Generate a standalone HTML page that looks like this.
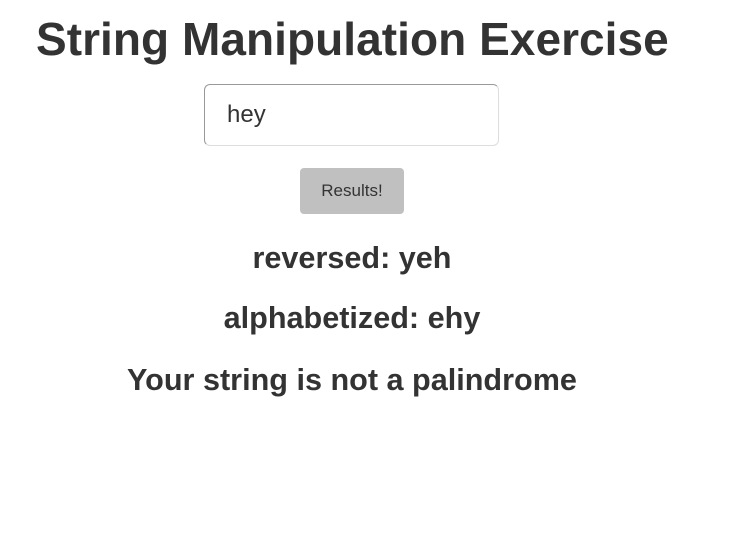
<!DOCTYPE html>
<html><head><style>
body{margin:0;width:744px;height:538px;background:#fff;font-family:"Liberation Sans",Arial,sans-serif;color:#333;position:relative;overflow:hidden}
.t{position:absolute;left:0;width:704px;text-align:center;white-space:nowrap}
h1{position:absolute;left:36px;top:12px;margin:0;font-size:46px;font-weight:bold;white-space:nowrap;letter-spacing:0.05px}
.inp{position:absolute;left:204px;top:84px;border:1px solid #ddd;border-top-color:#999;border-left-color:#999;border-radius:6px;box-sizing:border-box;width:295px;height:62px;font-size:24px;padding:16px 0 0 22px}
.btn{position:absolute;left:300px;top:168px;width:104px;height:46px;background:#c0c0c0;border-radius:4px;font-size:17px;text-align:center;line-height:46px;color:#333}
.r{font-size:30.6px;font-weight:bold}
</style></head><body>
<h1>String Manipulation Exercise</h1>
<div class="inp">hey</div>
<div class="btn">Results!</div>
<div class="t r" style="top:241px">reversed: yeh</div>
<div class="t r" style="top:301px">alphabetized: ehy</div>
<div class="t r" style="top:363px">Your string is not a palindrome</div>
</body></html>
